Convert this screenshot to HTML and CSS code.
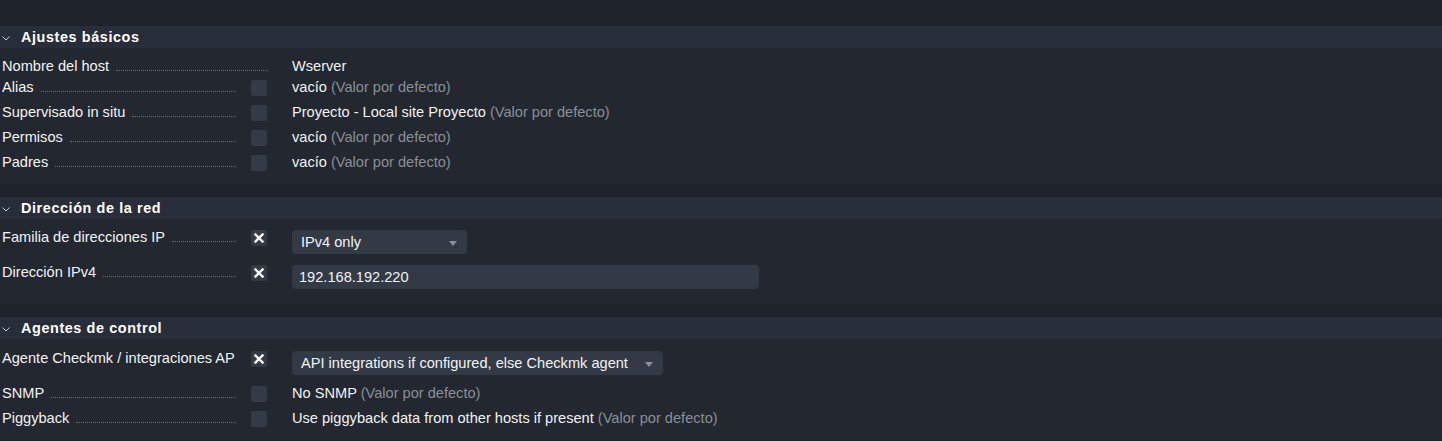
FILE: index.html
```html
<!DOCTYPE html>
<html lang="es">
<head>
<meta charset="utf-8">
<title>Propiedades del host</title>
<link rel="stylesheet" href="styles.css">
</head>
<body>
<div class="page">

  <section class="sec sec--first">
    <div class="sec-head">
      <svg class="chev" width="8" height="5" viewBox="0 0 8 5"><polyline points="0.5,0.5 4,4 7.5,0.5" fill="none" stroke="#c8ccd2" stroke-width="1"/></svg>
      <span class="sec-title">Ajustes básicos</span>
    </div>
    <div class="sec-body">
      <div class="row row--plain">
        <div class="label label--wide"><span class="ltxt">Nombre del host</span><span class="dots"></span></div>
        <div class="value value--wide">Wserver</div>
      </div>
      <div class="row">
        <div class="label"><span class="ltxt">Alias</span><span class="dots"></span></div>
        <span class="cb"></span>
        <div class="value">vacío <span class="def">(Valor por defecto)</span></div>
      </div>
      <div class="row">
        <div class="label"><span class="ltxt">Supervisado in situ</span><span class="dots"></span></div>
        <span class="cb"></span>
        <div class="value">Proyecto - Local site Proyecto <span class="def">(Valor por defecto)</span></div>
      </div>
      <div class="row">
        <div class="label"><span class="ltxt">Permisos</span><span class="dots"></span></div>
        <span class="cb"></span>
        <div class="value">vacío <span class="def">(Valor por defecto)</span></div>
      </div>
      <div class="row">
        <div class="label"><span class="ltxt">Padres</span><span class="dots"></span></div>
        <span class="cb"></span>
        <div class="value">vacío <span class="def">(Valor por defecto)</span></div>
      </div>
    </div>
  </section>

  <section class="sec">
    <div class="sec-head">
      <svg class="chev" width="8" height="5" viewBox="0 0 8 5"><polyline points="0.5,0.5 4,4 7.5,0.5" fill="none" stroke="#c8ccd2" stroke-width="1"/></svg>
      <span class="sec-title">Dirección de la red</span>
    </div>
    <div class="sec-body">
      <div class="row">
        <div class="label"><span class="ltxt">Familia de direcciones IP</span><span class="dots"></span></div>
        <span class="cb cb--on"><svg width="10" height="10" viewBox="0 0 10 10"><path d="M1.5 1.5 L8.5 8.5 M8.5 1.5 L1.5 8.5" stroke="#ffffff" stroke-width="2.4" stroke-linecap="square"/></svg></span>
        <div class="value">
          <div class="select select--ip"><span>IPv4 only</span><span class="arrow"></span></div>
        </div>
      </div>
      <div class="row">
        <div class="label"><span class="ltxt">Dirección IPv4</span><span class="dots"></span></div>
        <span class="cb cb--on"><svg width="10" height="10" viewBox="0 0 10 10"><path d="M1.5 1.5 L8.5 8.5 M8.5 1.5 L1.5 8.5" stroke="#ffffff" stroke-width="2.4" stroke-linecap="square"/></svg></span>
        <div class="value">
          <div class="input">192.168.192.220</div>
        </div>
      </div>
    </div>
  </section>

  <section class="sec">
    <div class="sec-head">
      <svg class="chev" width="8" height="5" viewBox="0 0 8 5"><polyline points="0.5,0.5 4,4 7.5,0.5" fill="none" stroke="#c8ccd2" stroke-width="1"/></svg>
      <span class="sec-title">Agentes de control</span>
    </div>
    <div class="sec-body sec-body--agents">
      <div class="row">
        <div class="label"><span class="ltxt">Agente Checkmk / integraciones AP</span></div>
        <span class="cb cb--on"><svg width="10" height="10" viewBox="0 0 10 10"><path d="M1.5 1.5 L8.5 8.5 M8.5 1.5 L1.5 8.5" stroke="#ffffff" stroke-width="2.4" stroke-linecap="square"/></svg></span>
        <div class="value">
          <div class="select select--agent"><span>API integrations if configured, else Checkmk agent</span><span class="arrow"></span></div>
        </div>
      </div>
      <div class="row">
        <div class="label"><span class="ltxt">SNMP</span><span class="dots"></span></div>
        <span class="cb"></span>
        <div class="value">No SNMP <span class="def">(Valor por defecto)</span></div>
      </div>
      <div class="row">
        <div class="label"><span class="ltxt">Piggyback</span><span class="dots"></span></div>
        <span class="cb"></span>
        <div class="value">Use piggyback data from other hosts if present <span class="def">(Valor por defecto)</span></div>
      </div>
    </div>
  </section>

</div>
</body>
</html>
```

FILE: styles.css
```css
html, body {
  margin: 0;
  padding: 0;
  background: #1e222a;
}

body {
  font-family: "Liberation Sans", Arial, sans-serif;
  font-size: 14.6px;
  color: #f2f3f5;
  overflow: hidden;
}

.page {
  padding-top: 26px;
}

.sec {
  margin-top: 13px;
}

.sec--first {
  margin-top: 0;
}

.sec-head {
  height: 22px;
  background: #282e39;
  display: flex;
  align-items: center;
}

.chev {
  margin-left: 2px;
  margin-top: 2px;
  flex: none;
}

.sec-title {
  margin-left: 11px;
  font-weight: bold;
  font-size: 14.4px;
  letter-spacing: 0.6px;
  color: #ffffff;
  line-height: 22px;
}

.sec-body {
  background: #222730;
  padding: 7px 0 8px;
}

.sec-body--agents {
  padding-top: 8px;
}

.row {
  display: flex;
  align-items: flex-start;
  padding: 4px 0 5px 2px;
  line-height: 15px;
}

.row--plain {
  padding: 4px 0 2px 2px;
}

.label {
  width: 234px;
  flex: none;
  display: flex;
  align-items: baseline;
  white-space: nowrap;
  overflow: hidden;
}

.label--wide {
  width: 266px;
}

.ltxt {
  flex: none;
}

.dots {
  flex: 1;
  margin-left: 7px;
  border-bottom: 1px dotted #6a707a;
  height: 1px;
  min-width: 0;
}

.cb {
  flex: none;
  width: 16px;
  height: 16px;
  margin-left: 15px;
  background: #343b47;
  border-radius: 2px;
  display: flex;
  align-items: center;
  justify-content: center;
}

.value {
  margin-left: 25px;
  white-space: nowrap;
}

.value--wide {
  margin-left: 24px;
}

.def {
  color: #8a8f97;
}

.select {
  height: 24px;
  margin-bottom: 2px;
  background: #323a46;
  border-radius: 4px;
  display: flex;
  align-items: center;
  justify-content: space-between;
  padding: 0 10px 0 9px;
  box-sizing: border-box;
  line-height: 24px;
}

.select--ip {
  width: 175px;
}

.select--agent {
  width: 371px;
}

.arrow {
  width: 0;
  height: 0;
  border-left: 4px solid transparent;
  border-right: 4px solid transparent;
  border-top: 5px solid #8b9099;
  margin-top: 2px;
}

.input {
  width: 467px;
  height: 24px;
  margin-bottom: 2px;
  background: #323a46;
  border-radius: 4px;
  padding: 0 7px;
  box-sizing: border-box;
  line-height: 24px;
}
```
